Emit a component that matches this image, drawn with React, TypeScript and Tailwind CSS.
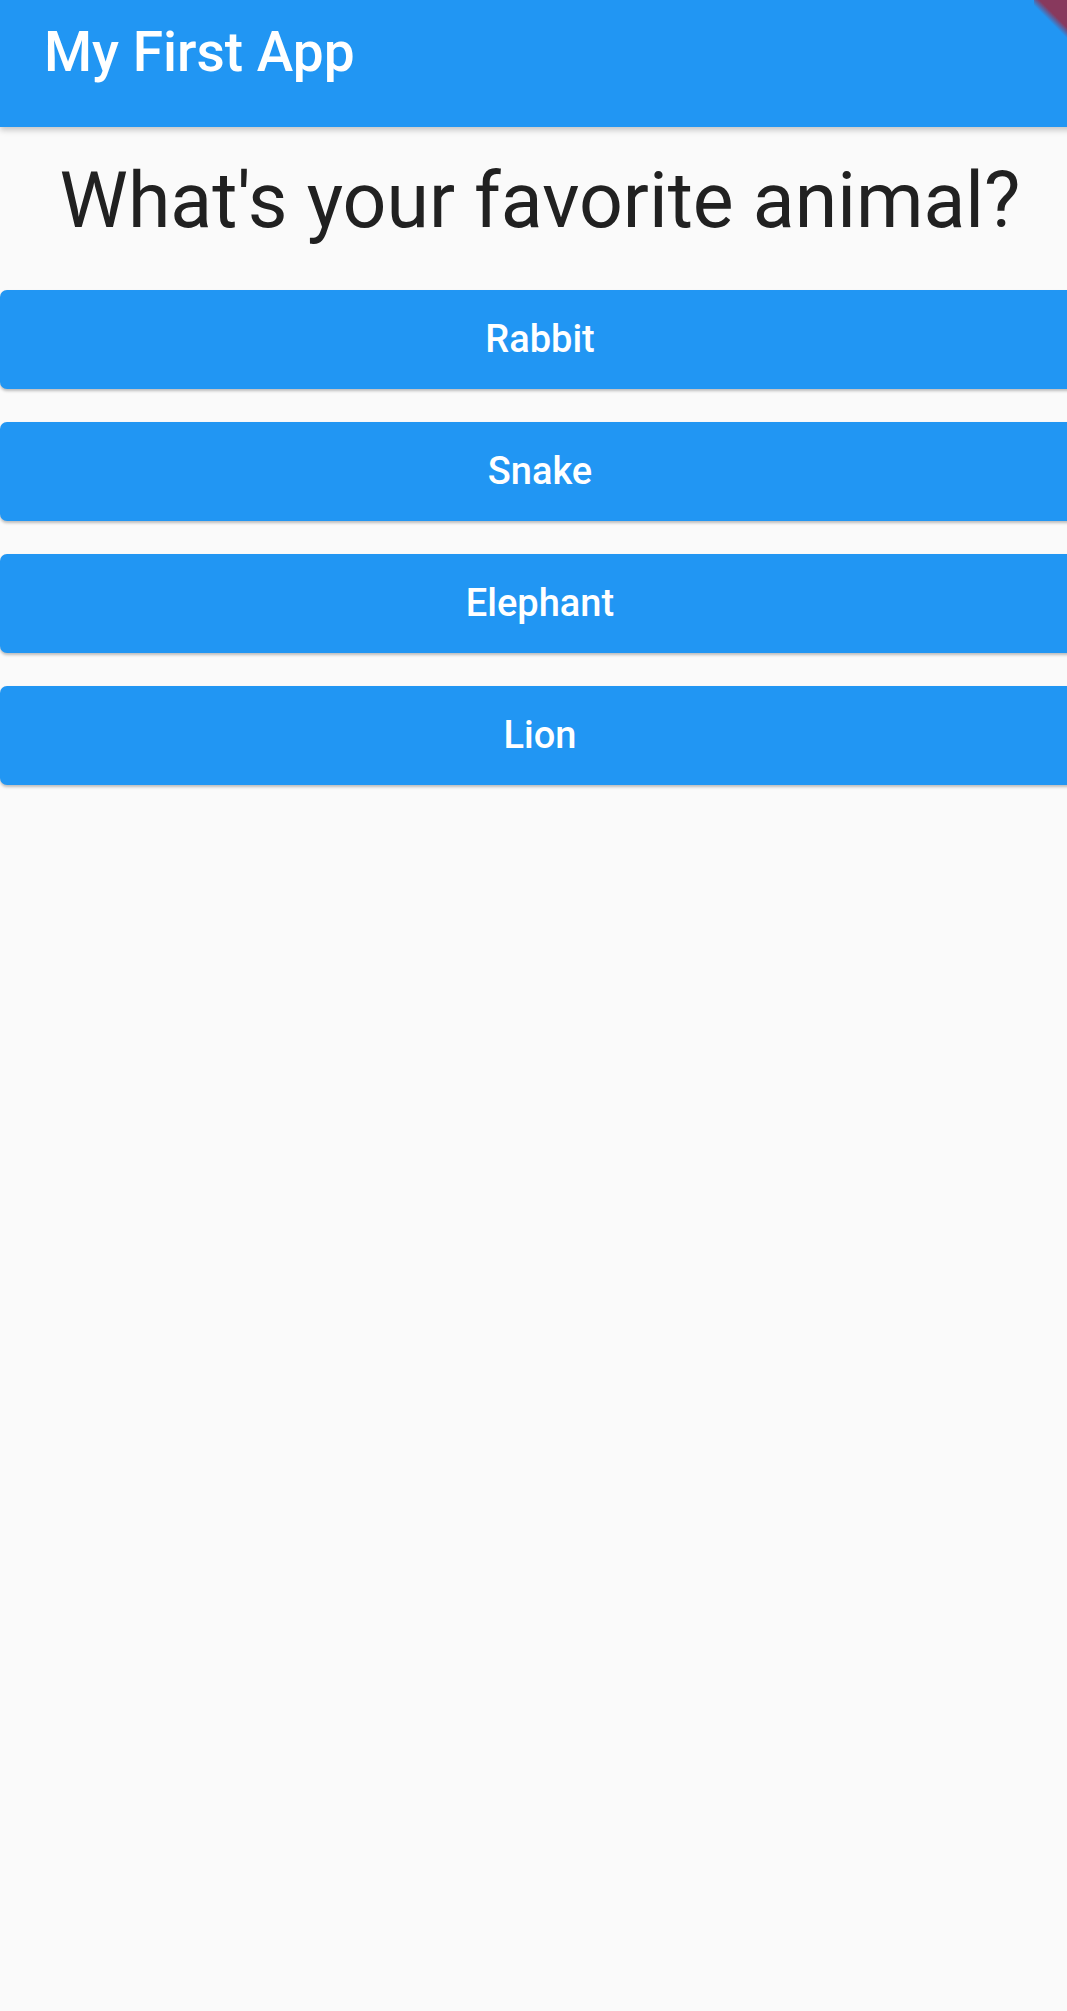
import React from 'react';

const answers = ['Rabbit', 'Snake', 'Elephant', 'Lion'];

const App: React.FC = () => {
  return (
    <div className="min-h-screen w-full overflow-hidden bg-[#fafafa] font-['Roboto',sans-serif]">
      <div className="relative w-[1080px]">
        <header className="relative z-10 h-[127px] bg-[#2196f3] pl-[44px] pt-[20px] shadow-[0_3px_6px_rgba(0,0,0,0.22)]">
          <h1 className="text-[55px] font-medium leading-[64px] text-white">My First App</h1>
          {/* debug banner corner */}
          <div className="absolute right-0 top-0 h-[46px] w-[46px] bg-[linear-gradient(45deg,transparent_44%,#88395d_56%)]" />
        </header>

        <div className="mt-[29px] text-center text-[77px] leading-[90px] text-[#212121]">
          What's your favorite animal?
        </div>

        <div className="mt-[44px] flex flex-col gap-[33px]">
          {answers.map((a) => (
            <button
              key={a}
              className="flex h-[99px] w-full items-center justify-center rounded-[7px] bg-[#2196f3] text-[38px] font-medium text-white shadow-[0_2px_3px_rgba(0,0,0,0.25)]"
            >
              {a}
            </button>
          ))}
        </div>
      </div>
    </div>
  );
};

export default App;
